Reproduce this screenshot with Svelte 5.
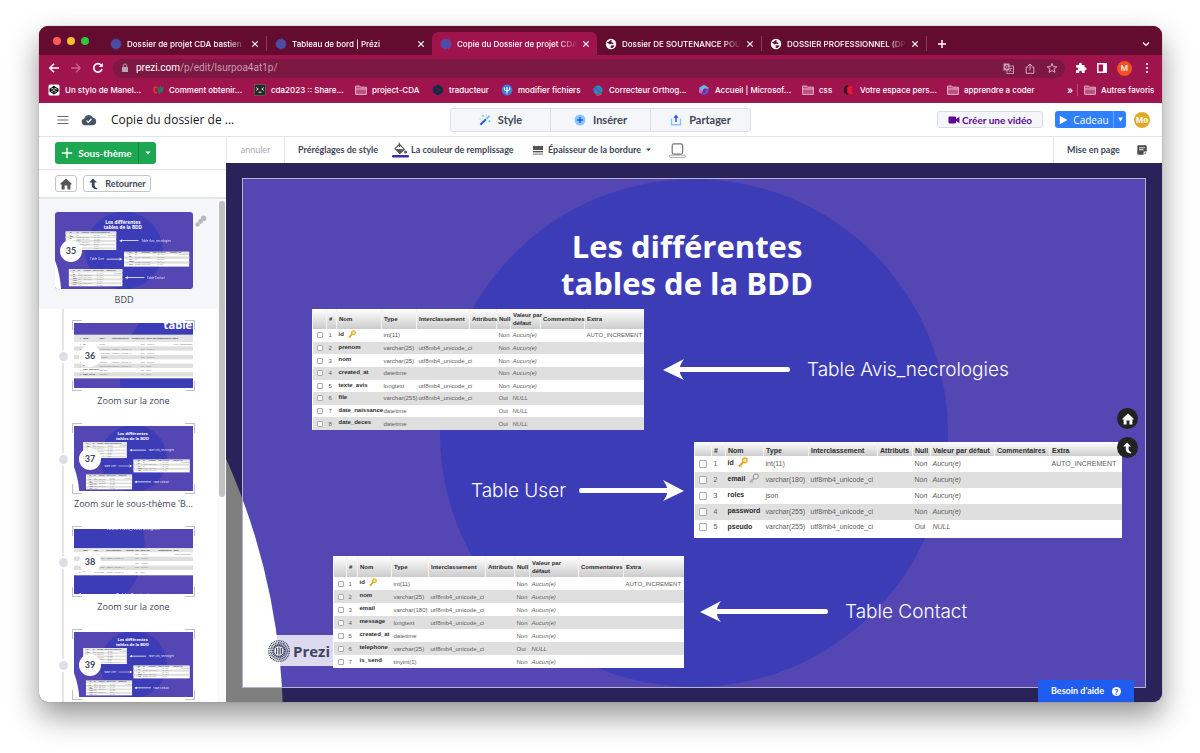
<script>
  const tabs = [
    { icon: 'prezi', title: 'Dossier de projet CDA bastien' },
    { icon: 'prezi', title: 'Tableau de bord | Prézi' },
    { icon: 'prezi', title: 'Copie du Dossier de projet CDA', active: true },
    { icon: 'globe', title: 'Dossier DE SOUTENANCE POU' },
    { icon: 'globe', title: 'DOSSIER PROFESSIONNEL (DP' }
  ];

  const bookmarks = [
    { icon: 'codepen', text: 'Un stylo de Manel...' },
    { icon: 'cv', text: 'Comment obtenir...' },
    { icon: 'term', text: 'cda2023 :: Share...' },
    { icon: 'folder', text: 'project-CDA' },
    { icon: 'deepl', text: 'traducteur' },
    { icon: 'psi', text: 'modifier fichiers' },
    { icon: 'ortho', text: 'Correcteur Orthog...' },
    { icon: 'ms', text: 'Accueil | Microsof...' },
    { icon: 'folder', text: 'css' },
    { icon: 'moon', text: 'Votre espace pers...' },
    { icon: 'folder', text: 'apprendre a coder' }
  ];

  const heads = ['', '#', 'Nom', 'Type', 'Interclassement', 'Attributs', 'Null', 'Valeur par défaut', 'Commentaires', 'Extra'];
  const U = 'utf8mb4_unicode_ci';

  // x, y, w: place on the slide; cols: left edge of the text of each column
  const tables = [
    {
      id: 'avis', x: 312, y: 309, w: 331, head: 20, row: 12, size: 6, height: 121,
      cols: [317, 328, 338, 383, 418, 471, 498, 512, 542, 586],
      rows: [
        ['id', 'int(11)', '', 'Non', 'Aucun(e)', 'AUTO_INCREMENT', 'gold'],
        ['prenom', 'varchar(25)', U, 'Non', 'Aucun(e)'],
        ['nom', 'varchar(25)', U, 'Non', 'Aucun(e)'],
        ['created_at', 'datetime', '', 'Non', 'Aucun(e)'],
        ['texte_avis', 'longtext', U, 'Non', 'Aucun(e)'],
        ['file', 'varchar(255)', U, 'Oui', 'NULL'],
        ['date_naissance', 'datetime', '', 'Oui', 'NULL'],
        ['date_deces', 'datetime', '', 'Oui', 'NULL']
      ]
    },
    {
      id: 'user', x: 694, y: 442, w: 427, head: 14, row: 16, size: 7, height: 97,
      cols: [699, 713, 727, 765, 810, 879, 914, 932, 996, 1051],
      rows: [
        ['id', 'int(11)', '', 'Non', 'Aucun(e)', 'AUTO_INCREMENT', 'gold'],
        ['email', 'varchar(180)', U, 'Non', 'Aucun(e)', '', 'silver'],
        ['roles', 'json', '', 'Non', 'Aucun(e)'],
        ['password', 'varchar(255)', U, 'Non', 'Aucun(e)'],
        ['pseudo', 'varchar(255)', U, 'Oui', 'NULL']
      ]
    },
    {
      id: 'contact', x: 333, y: 556, w: 350, head: 21, row: 13, size: 6, height: 112,
      cols: [337, 348, 359, 393, 430, 487, 516, 531, 580, 625],
      rows: [
        ['id', 'int(11)', '', 'Non', 'Aucun(e)', 'AUTO_INCREMENT', 'gold'],
        ['nom', 'varchar(25)', U, 'Non', 'Aucun(e)'],
        ['email', 'varchar(180)', U, 'Non', 'Aucun(e)'],
        ['message', 'longtext', U, 'Non', 'Aucun(e)'],
        ['created_at', 'datetime', '', 'Non', 'Aucun(e)'],
        ['telephone', 'varchar(25)', U, 'Oui', 'NULL'],
        ['is_send', 'tinyint(1)', '', 'Non', 'Aucun(e)']
      ]
    }
  ];

  const colWidths = (t) =>
    t.cols.map((c, i) => {
      const left = i === 0 ? t.x : c - 2;
      const right = i === t.cols.length - 1 ? t.x + t.w : t.cols[i + 1] - 2;
      return right - left;
    });

  const captions = [
    { x: 687, y: 257, text: 'Les différentes', title: true },
    { x: 687, y: 294, text: 'tables de la BDD', title: true },
    { x: 808, y: 376, text: 'Table Avis_necrologies' },
    { x: 472, y: 497, text: 'Table User' },
    { x: 845, y: 618, text: 'Table Contact' }
  ];

  const whole = { x: 242, y: 179, w: 904, h: 509, captions: [0, 1, 2, 3, 4], tables: [0, 1, 2] };
  const steps = [
    { n: 36, label: 'Zoom sur la zone', view: { x: 312, y: 274, w: 331, h: 185, captions: [1], tables: [0] } },
    { n: 37, label: "Zoom sur le sous-thème 'B...", view: whole },
    { n: 38, label: 'Zoom sur la zone', view: { x: 694, y: 370, w: 427, h: 239, captions: [2, 4], tables: [1] } },
    { n: 39, label: "Zoom sur le sous-thème 'B...", view: whole }
  ];

  const cellText = (r, k) =>
    [
      [1, String(k + 1)],
      [3, r[1]],
      [4, r[2]],
      [6, r[3]],
      [7, r[4]],
      [9, r[5]]
    ].filter((c) => c[1]);
</script>

{#snippet art()}
  <rect x="200" y="100" width="1100" height="700" fill="#5447b4" />
  <circle cx="694" cy="433" r="254" fill="#3d3cb7" />
  <circle cx="-367" cy="725" r="650" fill="#fff" />
  <g fill="#fff">
    <path d="M663 370 L684 359 Q680 365 680 367 H788 Q790 367 790 370 Q790 372 788 372 H680 Q680 375 684 380Z" />
    <path d="M684 491 L663 480 Q667 486 667 488 H581 Q579 488 579 491 Q579 493 581 493 H667 Q667 496 663 501Z" />
    <path d="M700 612 L721 601 Q717 607 717 609 H826 Q828 609 828 612 Q828 614 826 614 H717 Q717 617 721 622Z" />
  </g>
{/snippet}

{#snippet mini(view)}
  <svg class="mini" viewBox="{view.x} {view.y} {view.w} {view.h}" preserveAspectRatio="xMidYMid slice" aria-hidden="true">
    {@render art()}
    {#each view.captions as c}
      <text class:minititle={captions[c].title} class="minilabel" x={captions[c].x} y={captions[c].y}>{captions[c].text}</text>
    {/each}
    {#each view.tables as index}
      {@const t = tables[index]}
      <g font-family="Liberation Sans, sans-serif" font-size={t.size} fill="#777">
        <rect x={t.x} y={t.y} width={t.w} height={t.height} fill="#fff" />
        <rect x={t.x} y={t.y} width={t.w} height={t.head} fill="#e4e4e4" />
        {#each heads as h, i}
          {#if h}<text x={t.cols[i]} y={t.y + t.head / 2 + 2} font-weight="700" fill="#333">{i === 7 ? 'Valeur par' : h}</text>{/if}
        {/each}
        {#each t.rows as r, k}
          {@const y = t.y + t.head + k * t.row}
          {#if k % 2}<rect x={t.x} {y} width={t.w} height={t.row} fill="#dfdfdf" />{/if}
          <text x={t.cols[2]} y={y + 7} font-weight="700" fill="#333">{r[0]}</text>
          {#each cellText(r, k) as c}
            <text x={t.cols[c[0]]} y={y + 9}>{c[1]}</text>
          {/each}
        {/each}
      </g>
    {/each}
  </svg>
{/snippet}

{#snippet house(size)}
  <svg width={size} height={size} viewBox="0 0 12 12" aria-hidden="true">
    <path fill="currentColor" d="M6 .5 11.5 5.6V6.4H10.4V11.5H7.4V7.6H4.6V11.5H1.6V6.4H.5V5.6Z" />
  </svg>
{/snippet}

{#snippet back(size)}
  <svg width={size} height={size} viewBox="0 0 12 12" aria-hidden="true">
    <path fill="currentColor" d="M5 .5 9 4.6H6.6V7.6Q6.8 9.6 9.4 10.4L9 11.4Q4 11 3.8 7.6V4.6H1.2Z" />
  </svg>
{/snippet}

{#snippet glyph(name)}
  <svg class="glyph" width="12" height="12" viewBox="0 0 12 12" aria-hidden="true">
    {#if name === 'prezi'}
      <circle cx="6" cy="6" r="4.6" fill="#3558bd" />
      <circle cx="6" cy="6" r="4.9" fill="none" stroke="#4b6bd0" stroke-dasharray=".9 .6" />
      <circle cx="6" cy="6" r="3" fill="none" stroke="#6a3f98" stroke-width=".8" />
      <path d="M5.1 3.8V8.2M6.9 3.8V8.2" stroke="#7c3478" stroke-width=".8" />
    {:else if name === 'globe'}
      <circle cx="6" cy="6" r="5.2" fill="#fff" />
      <path fill="#64102f" d="M1.7 4.4 4 3.6 5.7 2 7 2.6 6.2 4.1 8.5 5 8 6.3 6.2 5.8 4.6 6.5 3.6 5.6ZM5.8 7.6 8.2 7.2 9.6 7.8 8 9.8 5.6 9.9Z" />
    {:else if name === 'codepen'}
      <rect x=".5" y=".5" width="11" height="11" rx="1.5" fill="#fff" />
      <path fill="none" stroke="#111" stroke-width="1.1" d="M6 2.4 10 5V7.2L6 9.8 2 7.2V5ZM2 5 6 7.6 10 5M2 7.2 6 4.6 10 7.2M6 2.4V4.6M6 7.6V9.8" />
    {:else if name === 'cv'}
      <path fill="none" stroke="#e2352c" stroke-width="1.7" d="M5 4Q4 2.8 2.8 3.4T2.2 7 5 8.4" />
      <path fill="none" stroke="#257d60" stroke-width="1.6" d="M5.6 3 7.2 8.2 8.4 4 9.4 8.2 10.8 3" />
    {:else if name === 'term'}
      <rect x=".5" y=".5" width="11" height="11" fill="#292929" stroke="#6a6a50" stroke-width=".7" />
      <path fill="none" stroke="#ddd" d="M2.2 3.5 4.2 5 2.2 6.5M9.8 3.5 7.8 5 9.8 6.5M4.5 8.2H7.5" />
    {:else if name === 'folder'}
      <path fill="#b9507e" stroke="#e6bccd" stroke-width=".9" d="M.6 2H4.6L5.6 3.2H11.4V10.4H.6Z" />
      <path stroke="#e6bccd" stroke-width=".9" d="M.6 5H11.4" />
    {:else if name === 'deepl'}
      <path fill="#0f2b46" d="M6 .5 10.8 3.2V8.6L6 11.5 1.2 8.6V3.2Z" />
      <path stroke="#a0144e" stroke-width=".7" fill="none" d="M4.4 4.2 7.8 6.1 4.4 8" />
    {:else if name === 'psi'}
      <circle cx="6" cy="6" r="5.4" fill="#3e7de0" />
      <path fill="none" stroke="#fff" stroke-width="1.1" d="M3.4 3.4V5.2Q3.4 6.6 6 6.6T8.6 5.2V3.4M6 3V9.4" />
    {:else if name === 'ortho'}
      <circle cx="6" cy="6" r="4.6" fill="#218cc4" />
      <path stroke="#73489a" stroke-width="1.4" d="M2.6 2.4 9.4 10" />
      <path stroke="#e0604a" d="M4 11Q7 12 9.4 10" fill="none" />
    {:else if name === 'ms'}
      <path fill="#63b8ec" d="M6 .8 10.5 3.4V5L6 4.4 4.4 7.6 1.2 8.2 1.4 3.4Z" />
      <path fill="#5a4fd0" d="M10.5 4.6V8.6L6 11.3 2.4 9.4 6.4 8.2 8.4 5Z" />
      <path fill="#c068d6" d="M1.3 6 4.4 5.4V8.6L2.6 9.6 1.3 8.6Z" />
    {:else if name === 'moon'}
      <path fill="#35101f" d="M5.6 1A5 5 0 0 0 5.6 11 8 8 0 0 1 5.6 1Z" />
      <path fill="#f0162f" d="M10.4 3Q8.6 1 6.4 2.2 4.2 4 4.4 6T6.6 9.8 10.4 9L8.6 7.6 9.6 6 8 4.6Z" />
    {/if}
  </svg>
{/snippet}

<div class="desk">
  <div class="window">
    <header class="browser">
      <div class="tabstrip">
        <div class="lights"><i class="red"></i><i class="amber"></i><i class="green"></i></div>
        {#each tabs as tab, i}
          <div class="tab" class:active={tab.active} class:line={i === 0 || i > 2}>
            {@render glyph(tab.icon)}
            <span class="tabtitle">{tab.title}</span>
            <button class="bare" aria-label="Fermer l'onglet">
              <svg width="8" height="8" viewBox="0 0 8 8"><path d="M1.3 1.3 6.7 6.7M6.7 1.3 1.3 6.7" stroke="#fff" stroke-width="1.2" /></svg>
            </button>
          </div>
        {/each}
        <button class="bare plus" aria-label="Nouvel onglet">
          <svg width="10" height="10" viewBox="0 0 10 10"><path d="M5 1V9M1 5H9" stroke="#fff" stroke-width="1.5" /></svg>
        </button>
        <button class="bare chevron" aria-label="Rechercher dans les onglets">
          <svg width="8" height="8" viewBox="0 0 8 8"><path d="M1 2.6 4 5.4 7 2.6" fill="none" stroke="#fff" stroke-width="1.3" /></svg>
        </button>
      </div>

      <div class="addressbar">
        <nav class="history">
          <button class="bare" aria-label="Précédent"><svg width="12" height="12" viewBox="0 0 12 12"><path d="M11 6H2M6 1.8 1.8 6 6 10.2" fill="none" stroke="#fff" stroke-width="1.5" /></svg></button>
          <button class="bare" aria-label="Suivant"><svg width="12" height="12" viewBox="0 0 12 12"><path d="M1 6H10M6 1.8 10.2 6 6 10.2" fill="none" stroke="#c8638d" stroke-width="1.3" /></svg></button>
          <button class="bare" aria-label="Recharger"><svg width="12" height="12" viewBox="0 0 12 12"><path d="M10 7A4.2 4.2 0 1 1 9.2 3.2" fill="none" stroke="#fff" stroke-width="1.6" /><path d="M10.8 1V5H6.8Z" fill="#fff" /></svg></button>
        </nav>
        <div class="url">
          <svg width="8" height="10" viewBox="0 0 8 10" aria-hidden="true"><rect x="1" y="4" width="6" height="5" rx=".6" fill="#b8a5b4" /><path d="M2.3 4V2.6Q2.3 1 4 1T5.7 2.6V4" fill="none" stroke="#b8a5b4" /></svg>
          <span class="address"><b>prezi.com</b>/p/edit/lsurpoa4at1p/</span>
          <svg width="11" height="11" viewBox="0 0 11 11" aria-hidden="true"><rect x="4" y="3" width="6.5" height="7.5" fill="none" stroke="#c99db3" stroke-width=".9" /><rect x=".5" y=".5" width="6" height="7" fill="#c99db3" /><path d="M5 2.8Q2 2.2 2 4T5 5.2V4H3.8" stroke="#7d1843" stroke-width=".8" fill="none" /><path d="M6.5 5.5H9.5M8 4.8Q8 8 6 9M7 6.5 9.4 9" stroke="#c99db3" stroke-width=".7" fill="none" /></svg>
          <svg width="10" height="11" viewBox="0 0 10 11" aria-hidden="true"><path d="M3.4 4H1.2V10.3H8.8V4H6.6M5 7.4V1.2M2.9 3 5 1 7.1 3" fill="none" stroke="#d8a9bf" /></svg>
          <svg width="12" height="12" viewBox="0 0 12 12" aria-hidden="true"><path d="M6 1.4 7.3 4.6 10.8 4.8 8.1 7 9 10.4 6 8.5 3 10.4 3.9 7 1.2 4.8 4.7 4.6Z" fill="none" stroke="#d8a9bf" /></svg>
        </div>
        <svg width="12" height="12" viewBox="0 0 12 12" aria-hidden="true"><path d="M1 3H4V2.2A1.3 1.3 0 0 1 6.8 2.2V3H9.6V5.6H10.2A1.3 1.3 0 0 1 10.2 8.2H9.6V11H6.9V10.2A1.3 1.3 0 0 0 4.2 10.2V11H1V8.2H1.8A1.3 1.3 0 0 0 1.8 5.6H1Z" fill="#fff" /></svg>
        <svg width="10" height="10" viewBox="0 0 10 10" aria-hidden="true"><path d="M.8 .8H9.2V9.2H.8Z" fill="none" stroke="#fff" stroke-width="1.5" /><path d="M6 1H9V9H6Z" fill="#fff" /></svg>
        <span class="profile">M</span>
        <svg width="8" height="12" viewBox="0 0 8 12" aria-hidden="true"><g fill="#fff"><circle cx="5" cy="2" r="1.1" /><circle cx="5" cy="6" r="1.1" /><circle cx="5" cy="10" r="1.1" /></g></svg>
      </div>

      <nav class="bookmarks">
        {#each bookmarks as b}
          <a href="#top">{@render glyph(b.icon)}{b.text}</a>
        {/each}
        <span class="more">»</span>
        <a class="others" href="#top">{@render glyph('folder')}Autres favoris</a>
      </nav>
    </header>

    <div class="apphead">
      <div class="doc">
        <svg width="12" height="10" viewBox="0 0 12 10" aria-hidden="true"><path d="M.5 1.5H11.5M.5 5H11.5M.5 8.5H11.5" stroke="#6e6e6e" stroke-width="1.2" /></svg>
        <svg width="16" height="12" viewBox="0 0 16 12" aria-hidden="true"><path d="M4 11.3A3.5 3.5 0 0 1 3.4 4.4 4.6 4.6 0 0 1 12 3.8 3.8 3.8 0 0 1 12 11.3Z" fill="#485365" /><path d="M5.6 6.6 7.3 8.4 10.4 5" stroke="#fff" stroke-width="1.3" fill="none" /></svg>
        <h1>Copie du dossier de ...</h1>
      </div>
      <div class="segments">
        <button>
          <svg width="12" height="12" viewBox="0 0 12 12" aria-hidden="true"><path d="M1.4 10.8 7 5.2" stroke="#245fe8" stroke-width="2" /><path d="M7.4 4.8 10.6 1.8" stroke="#7cc2f7" stroke-width="2" /><path d="M4 .6V3.2M2.7 1.9H5.3M10.4 6V8.4M9.2 7.2H11.6M1.2 4.4V5.6M7.4 .6V1.6" stroke="#7ab8ea" stroke-width=".8" /></svg>
          Style
        </button>
        <button>
          <svg width="12" height="12" viewBox="0 0 12 12" aria-hidden="true"><circle cx="6" cy="6" r="5.5" fill="#84c8fb" /><path d="M6 3V9M3 6H9" stroke="#2257e6" stroke-width="1.4" /></svg>
          Insérer
        </button>
        <button>
          <svg width="12" height="12" viewBox="0 0 12 12" aria-hidden="true"><path d="M1.5 4.5V10.8H10.5V4.5" fill="none" stroke="#84c8fb" stroke-width="1.4" /><path d="M6 8V2.4" stroke="#2257e6" stroke-width="1.5" /><path d="M6 .4 8.6 3.8H3.4Z" fill="#2257e6" /></svg>
          Partager
        </button>
      </div>
      <div class="actions">
        <button class="video">
          <svg width="12" height="8" viewBox="0 0 12 8" aria-hidden="true"><path d="M.5 1.4Q.5 .6 1.4 .6H7Q8 .6 8 1.4V3L11.4 .8V7.2L8 5V6.6Q8 7.4 7 7.4H1.4Q.5 7.4 .5 6.6Z" fill="#5b0894" /></svg>
          Créer une vidéo
        </button>
        <div class="gift">
          <button><svg width="9" height="10" viewBox="0 0 9 10" aria-hidden="true"><path d="M.8 .8 8.4 5 .8 9.2Z" fill="#fff" /></svg>Cadeau</button>
          <button class="drop" aria-label="Options du cadeau"><svg width="5" height="5" viewBox="0 0 5 5"><path d="M.2 .6H4.8L2.5 4.4Z" fill="#fff" /></svg></button>
        </div>
        <span class="avatar">Mo</span>
      </div>
    </div>

    <div class="body">
      <aside>
        <div class="addrow">
          <button class="add"><svg width="12" height="12" viewBox="0 0 12 12" aria-hidden="true"><path d="M6 .8V11.2M.8 6H11.2" stroke="#fff" stroke-width="1.4" /></svg>Sous-thème</button>
          <button class="adddrop" aria-label="Autres types"><svg width="6" height="4" viewBox="0 0 6 4"><path d="M.4 .4H5.6L3 3.4Z" fill="#fff" /></svg></button>
        </div>
        <div class="backrow">
          <button class="home" aria-label="Accueil">{@render house(12)}</button>
          <button class="return">{@render back(12)}Retourner</button>
        </div>
        <div class="scroller">
          <div class="list">
            <div class="topic">
              <div class="shot">{@render mini(whole)}<span class="badge">35</span></div>
              <svg class="chain" width="12" height="12" viewBox="0 0 12 12" aria-hidden="true"><g fill="#b5bac2"><circle cx="8.6" cy="3.2" r="2.8" /><circle cx="5.5" cy="6.5" r="2.4" /><circle cx="2.6" cy="9.4" r="2.2" /></g></svg>
              <p>BDD</p>
            </div>
            <ol>
              {#each steps as s}
                <li>
                  <i class="dot"></i>
                  <div class="corners">
                    <svg class="marks" viewBox="0 0 122 71" preserveAspectRatio="none" aria-hidden="true"><path d="M.5 10V.5H10M112 .5H121.5V10M.5 61V70.5H10M112 70.5H121.5V61" fill="none" stroke="#bcc2cf" /></svg>
                    {@render mini(s.view)}
                    <span class="badge">{s.n}</span>
                  </div>
                  <p>{s.label}</p>
                </li>
              {/each}
            </ol>
          </div>
          <div class="track"><i></i></div>
        </div>
      </aside>

      <main>
        <div class="stylebar">
          <button class="undo" disabled>annuler</button>
          <button class="presets">Préréglages de style</button>
          <button class="fill">
            <svg width="17" height="16" viewBox="0 0 17 16" aria-hidden="true"><path d="M3 6.6 7.4 2.4 12.4 7.4 7.8 11.4Z" fill="none" stroke="#555" stroke-width="1.2" /><path d="M3.2 7 12 7.2 7.8 11.4Z" fill="#555" /><path d="M7.6 5V1.6Q7.6 .6 6.4 .9" stroke="#555" fill="none" /><circle cx="13.6" cy="10" r="1.5" fill="#555" /><rect y="13" width="17" height="2.4" rx="1" fill="#3431a6" /></svg>
            La couleur de remplissage
          </button>
          <button class="border">
            <svg width="10" height="9" viewBox="0 0 10 9" aria-hidden="true"><rect width="10" height="4" fill="#555" /><rect y="5" width="10" height="1.4" fill="#555" /><rect y="7.6" width="10" height="1" fill="#777" /></svg>
            Épaisseur de la bordure
            <svg width="5" height="4" viewBox="0 0 5 4" aria-hidden="true"><path d="M.2 .6H4.8L2.5 3.2Z" fill="#444" /></svg>
          </button>
          <button class="bare" aria-label="Couleur de la bordure"><svg width="17" height="15" viewBox="0 0 17 15"><rect x="3.2" y=".8" width="10.4" height="10.4" rx="1.8" fill="none" stroke="#777" stroke-width="1.2" /><rect x=".5" y="12.2" width="16" height="2.2" rx="1" fill="#fff" stroke="#999" stroke-width=".8" /></svg></button>
          <div class="pagebox">
            <button>Mise en page</button>
            <svg width="10" height="10" viewBox="0 0 10 10" aria-hidden="true"><path d="M1.5 .3H8.5Q9.7 .3 9.7 1.5V6.5H6.6V9.7H1.5Q.3 9.7 .3 8.5V1.5Q.3 .3 1.5 .3Z" fill="#4a4a4a" /><path d="M2 2.8H8M2 4.8H6.5" stroke="#fff" stroke-width=".9" /><path d="M7.6 7.5H9.7L7.6 9.6Z" fill="#4a4a4a" /></svg>
          </div>
        </div>

        <section class="canvas">
          <svg class="backdrop" viewBox="226 163 936 539" preserveAspectRatio="xMinYMin slice" aria-hidden="true">{@render art()}</svg>
          <h2 class="headline">Les différentes<br />tables de la BDD</h2>
          <span class="label l1">Table Avis_necrologies</span>
          <span class="label l2">Table User</span>
          <span class="label l3">Table Contact</span>

          <div class="brand">
            <svg width="24" height="24" viewBox="0 0 24 24" aria-hidden="true"><g fill="none" stroke="#454c66"><circle cx="12" cy="12" r="10.3" stroke-width="1.5" stroke-dasharray="1 .8" /><circle cx="12" cy="12" r="8.2" stroke-width="1.6" stroke-dasharray="1.1 .6" /><circle cx="12" cy="12" r="5.8" stroke-width="2.4" stroke-dasharray="1.4 .35" /><path d="M9.6 9V15M12 8.4V15.6M14.4 9V15" stroke-width="1.2" /></g></svg>
            Prezi
          </div>

          {#each tables as t}
            <table class={t.id}>
              <colgroup>{#each colWidths(t) as w}<col style="width:{w}px" />{/each}</colgroup>
              <thead>
                <tr>{#each heads as h, i}<th scope="col">{#if i === 7 && t.id !== 'user'}Valeur par<br />défaut{:else}{h}{/if}</th>{/each}</tr>
              </thead>
              <tbody>
                {#each t.rows as r, k}
                  <tr>
                    <td class="tick"><input type="checkbox" aria-label={r[0]} /></td>
                    <td>{k + 1}</td>
                    <td class="name">{r[0]}{#if r[6]}<svg class="key" viewBox="0 0 10 10" aria-hidden="true"><path d="M1 9.4 5.6 4.8" stroke={r[6] === 'gold' ? '#dfa52c' : '#aaa'} stroke-width="2" /><path d="M2.4 8.4 3.8 9.6" stroke={r[6] === 'gold' ? '#dfa52c' : '#aaa'} stroke-width="1.2" /><circle cx="6.8" cy="3.4" r="2.4" fill={r[6] === 'gold' ? '#fbe08c' : '#eee'} stroke={r[6] === 'gold' ? '#e5ac34' : '#a5a5a5'} stroke-width="1.3" /></svg>{/if}</td>
                    <td>{r[1]}</td>
                    <td>{r[2]}</td>
                    <td></td>
                    <td>{r[3]}</td>
                    <td><em>{r[4]}</em></td>
                    <td></td>
                    <td>{r[5] ?? ''}</td>
                  </tr>
                {/each}
              </tbody>
            </table>
          {/each}

          <div class="frame"></div>
          <div class="floating">
            <button aria-label="Vue générale">{@render house(12)}</button>
            <button aria-label="Revenir">{@render back(12)}</button>
          </div>
          <button class="help">Besoin d'aide <span>?</span></button>
        </section>
      </main>
    </div>
  </div>
</div>

<style>
  :global(body) { margin: 0; background: #fff; }
  .desk {
    box-sizing: border-box;
    height: 100vh;
    min-height: 400px;
    padding: 26px 38px 51px 39px;
    display: flex;
    overflow: hidden;
    font: 700 9px/12px Lato, sans-serif;
    color: #3e4656;
  }
  button { font: inherit; color: inherit; padding: 0; margin: 0; border: 0; background: none; white-space: nowrap; }
  svg { flex: none; display: block; }
  p, h1, h2, ol { margin: 0; padding: 0; list-style: none; }
  .window {
    flex: 1;
    min-width: 0;
    display: flex;
    flex-direction: column;
    border-radius: 9px;
    overflow: hidden;
    background: #fff;
    box-shadow: 0 0 1px rgba(0, 0, 0, .6), 0 14px 30px rgba(0, 0, 0, .42);
  }
  .bare { display: flex; align-items: center; }

  /* browser chrome */
  .browser { background: #a0144e; color: #fff; font: 500 8px/12px Inter, sans-serif; height: 77px; }
  .tabstrip { display: flex; align-items: center; height: 29px; background: #640c30; }
  .lights { display: flex; gap: 6px; width: 49px; padding-left: 14px; }
  .lights i { width: 8px; height: 8px; border-radius: 50%; }
  .red { background: #fc5c56; }
  .amber { background: #fdbb2e; }
  .green { background: #28c840; }
  .tab { position: relative; flex: 0 1 165px; min-width: 0; box-sizing: border-box; height: 23px; margin-top: 6px; padding: 0 7px 0 8px; display: flex; align-items: center; gap: 5px; }
  .tab.active { background: #a0144e; border-radius: 6px 6px 0 0; }
  .tab.line { border-right: 1px solid #8a3a59; border-image: linear-gradient(transparent 20%, #8a3a59 20%, #8a3a59 80%, transparent 80%) 1; }
  .tabtitle { flex: 1; overflow: hidden; white-space: nowrap; mask-image: linear-gradient(90deg, #000 85%, transparent); }
  .plus { margin: 6px 0 0 10px; }
  .chevron { margin: 6px 12px 0 auto; }
  .addressbar { display: flex; align-items: center; gap: 10px; height: 26px; padding: 0 12px 0 9px; }
  .history { display: flex; gap: 10px; width: 55px; }
  .url { flex: 1; min-width: 0; height: 19px; border-radius: 10px; background: #7d1843; display: flex; align-items: center; gap: 11px; padding: 0 7px 0 8px; }
  .address { flex: 1; margin-left: -4px; font: 400 10px/14px Roboto, sans-serif; color: #c79bb0; }
  .address b { font-weight: 400; color: #fff; }
  .profile { width: 15px; height: 15px; border-radius: 50%; background: #f4511e; text-align: center; line-height: 15px; }
  .bookmarks { display: grid; grid-template-columns: 104px 102px 101px 77px 69px 91px 106px 104px 41px 104px 1fr 10px 78px; align-items: center; height: 17px; padding: 0 7px 0 9px; }
  .bookmarks a { display: flex; align-items: center; gap: 5px; color: #fff; text-decoration: none; white-space: nowrap; }
  .more { font-size: 10px; }
  .bookmarks .others { border-left: 1px solid #b84a78; padding-left: 6px; }

  /* application header */
  .apphead { display: grid; grid-template-columns: 1fr 301px 1fr; align-items: center; height: 33px; border-bottom: 1px solid #e2e4e8; }
  .doc { display: flex; align-items: center; gap: 12px; padding-left: 18px; }
  .doc h1 { font: 500 12px/16px "Open Sans", sans-serif; color: #16181d; margin-left: 2px; white-space: nowrap; }
  .segments { display: flex; font-size: 11px; border: 1px solid #dcdfe4; border-radius: 3px; background: #f5f6f9; height: 22px; }
  .segments button { flex: 1; display: flex; align-items: center; justify-content: center; gap: 7px; }
  .segments button + button { border-left: 1px solid #dcdfe4; }
  .actions { display: flex; align-items: center; justify-content: flex-end; gap: 12px; padding-right: 12px; }
  .video { display: flex; align-items: center; justify-content: center; gap: 2px; width: 106px; height: 17px; box-sizing: border-box; border: 1px solid #d9dce2; border-radius: 3px; background: #f5f6f9; color: #5b0894; font-size: 10px; }
  .gift { display: flex; height: 17px; background: #2f80ff; border-radius: 3px; color: #fff; font: 400 10px/12px "Open Sans", sans-serif; }
  .gift button { display: flex; align-items: center; justify-content: center; gap: 5px; width: 58px; }
  .gift .drop { width: 13px; border-left: 1px solid #6ba5ff; }
  .avatar { width: 16px; height: 16px; border-radius: 50%; background: #e0aa28; color: #fff; font: 700 8px/16px "Open Sans", sans-serif; text-align: center; margin-left: -4px; }

  .body { flex: 1; min-height: 0; display: flex; }

  /* path sidebar */
  aside { width: 188px; display: flex; flex-direction: column; flex: none; }
  .addrow { display: flex; align-items: center; height: 32px; padding-left: 16px; border-bottom: 1px solid #e2e4e8; font-size: 10px; color: #fff; }
  .add, .adddrop { height: 22px; background: #1da750; display: flex; align-items: center; justify-content: center; }
  .add { width: 83px; gap: 5px; border-radius: 3px 0 0 3px; }
  .adddrop { width: 18px; border-radius: 0 3px 3px 0; border-left: 1px solid #178a42; box-sizing: border-box; }
  .backrow { display: flex; align-items: center; gap: 6px; height: 27px; padding-left: 16px; border-bottom: 2px solid #e2e4ea; color: #3e4656; }
  .backrow button { height: 17px; box-sizing: border-box; border: 1px solid #c3c6cb; border-radius: 3px; display: flex; align-items: center; justify-content: center; gap: 5px; }
  .home { width: 22px; color: #555; }
  .return { width: 68px; }
  .scroller { flex: 1; min-height: 0; display: flex; }
  .list { flex: 1; overflow: hidden; font: 500 9px/12px "Open Sans", sans-serif; }
  .topic { position: relative; background: #f5f6f9; padding: 13px 0 3px 16px; height: 94px; }
  .topic .shot { position: relative; width: 138px; height: 77px; border-radius: 3px; }
  .topic .mini { border-radius: 3px; }
  .topic p { width: 138px; margin-top: 5px; }
  .chain { position: absolute; left: 156px; top: 16px; }
  .mini { width: 100%; height: 100%; display: block; }
  .minilabel { font: 400 18px Inter, sans-serif; fill: #fff; opacity: .85; }
  .minititle { font: 700 31px "Open Sans", sans-serif; text-anchor: middle; opacity: 1; }
  .list p { text-align: center; white-space: nowrap; }
  .badge { position: absolute; left: 5px; top: 28px; width: 22px; height: 22px; border-radius: 50%; background: #fff; text-align: center; font: 700 9px/22px Lato, sans-serif; }
  ol { position: relative; }
  li { position: relative; height: 81px; padding: 11px 22px 11px 33px; }
  li::before { content: ""; position: absolute; left: 23px; top: 0; bottom: 0; width: 2px; background: #e4e5ea; }
  .dot { position: absolute; left: 20px; top: 41px; width: 9px; height: 9px; border-radius: 50%; background: #dddfe5; border-top: 2px solid #fff; border-bottom: 2px solid #fff; }
  .corners { position: relative; box-sizing: border-box; height: 71px; padding: 3px 2px; }
  .marks { position: absolute; inset: 0; width: 100%; height: 100%; }
  .corners .badge { left: 7px; top: 25px; }
  li p { margin: 4px -10px 0; }
  .track { width: 10px; background: #fafafa; }
  .track i { display: block; width: 6px; height: 296px; margin: 2px 0 0 2px; border-radius: 3px; background: #c1c1c1; }

  /* editor */
  main { flex: 1; min-width: 0; display: flex; flex-direction: column; border-left: 1px solid #e2e4e8; margin-left: -1px; }
  .stylebar { display: flex; align-items: stretch; height: 26px; }
  .stylebar button { display: flex; align-items: center; }
  .stylebar .undo { width: 58px; justify-content: center; color: #a9adb5; font-weight: 400; border-right: 1px solid #e2e4e8; }
  .presets { margin-left: 13px; width: 94px; }
  .stylebar .fill { gap: 2px; width: 141px; }
  .stylebar .border { gap: 5px; width: 136px; }
  .pagebox { margin-left: auto; display: flex; align-items: center; width: 109px; box-sizing: border-box; justify-content: space-between; border-left: 1px solid #e2e4e8; padding: 0 15px 0 13px; }

  .canvas { position: relative; flex: 1; overflow: hidden; background: #5447b4; margin-left: -1px; }
  .backdrop { position: absolute; inset: 0; width: 100%; height: 100%; }
  .headline { position: absolute; left: 291px; top: 65px; width: 340px; text-align: center; font: 700 31px/37px "Open Sans", sans-serif; color: #fff; }
  .label { position: absolute; font: 300 19px/24px Inter, sans-serif; color: #fff; white-space: nowrap; }
  .l1 { left: 581px; top: 195px; }
  .l2 { left: 245px; top: 316px; }
  .l3 { left: 619px; top: 437px; }
  .brand { position: absolute; left: 37px; top: 472px; width: 80px; height: 31px; box-sizing: border-box; padding-left: 4px; display: flex; align-items: center; gap: 2px; border-radius: 3px; background: rgba(255, 255, 255, .8); font: 700 15px/20px "Open Sans", sans-serif; color: #40465e; }

  table { position: absolute; border-collapse: collapse; table-layout: fixed; background: #fff; font: 400 6px/8px "Liberation Sans", sans-serif; color: #606060; }
  .avis { left: 86px; top: 146px; width: 331px; height: 121px; }
  .user { left: 468px; top: 279px; width: 427px; font-size: 7px; }
  .contact { left: 107px; top: 393px; width: 350px; }
  .user { border-bottom: 3px solid #fff; }
  th, td { padding: 0 0 0 2px; text-align: left; white-space: nowrap; }
  th { height: 21px; color: #2c2c2c; font-weight: 700; background: linear-gradient(#fff, #ccc); border-left: 1px solid #f4f4f4; box-sizing: border-box; }
  .user th { height: 14px; padding-top: 3px; }
  td { height: 13px; box-sizing: border-box; }
  .user td { height: 16px; }
  .avis th { height: 20px; }
  .avis td { height: 12px; }
  tbody tr:nth-child(even) { background: #dfdfdf; }
  .name { vertical-align: top; padding-top: 1px; font-weight: 700; color: #2c2c2c; }
  .user .name { line-height: 11px; }
  .key { display: inline-block; width: 8px; height: 8px; margin-left: 4px; vertical-align: top; }
  .user .key { width: 10px; height: 10px; }
  .tick { padding-left: 4px; line-height: 0; }
  .tick input { appearance: none; display: block; width: 6px; height: 6px; margin: 0; border: 1px solid #adadad; border-radius: 1px; background: #fff; box-sizing: border-box; }
  .user .tick input { width: 8px; height: 8px; }

  .frame { position: absolute; inset: 15px 16px 14px; border: 1px solid #b3b3cc; box-shadow: 0 0 0 400px rgba(0, 0, 0, .5); pointer-events: none; }
  .floating { position: absolute; right: 24px; top: 245px; display: flex; flex-direction: column; gap: 8px; }
  .floating button { width: 21px; height: 21px; border-radius: 50%; background: #222; color: #fff; display: flex; align-items: center; justify-content: center; }
  .help { position: absolute; right: 28px; bottom: 0; width: 96px; height: 22px; border-radius: 2px 2px 0 0; background: #1f5cf0; color: #fff; display: flex; align-items: center; justify-content: center; gap: 8px; }
  .help span { width: 9px; height: 9px; border-radius: 50%; background: #fff; color: #1f5cf0; font: 700 8px/9px "Open Sans", sans-serif; text-align: center; }
</style>
